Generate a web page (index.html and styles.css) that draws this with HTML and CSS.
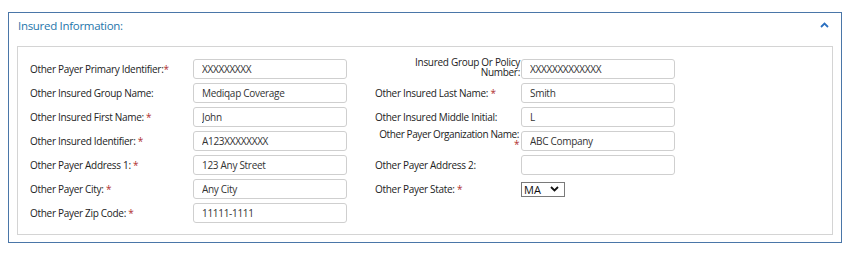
FILE: index.html
```html
<!DOCTYPE html>
<html>

<head>
    <title>Insured Information</title>
    <link rel="stylesheet" href="styles.css">
</head>

<body>
    <div class="panel">
        <div class="panel-header">
            <span class="panel-title">Insured Information:</span>
            <span class="chevron">
                <svg width="9" height="6" viewBox="0 0 9 6"><path d="M1 5 L4.5 1.5 L8 5" fill="none" stroke="#2a6fc0" stroke-width="1.8"/></svg>
            </span>
        </div>
        <div class="panel-body">
            <div class="fields">
                <div class="field left">
                    <label for="primary-id">Other Payer Primary Identifier:<span class="req">*</span></label>
                    <input type="text" id="primary-id" value="XXXXXXXXX">
                </div>
                <div class="field right">
                    <label for="policy" class="wrap">Insured Group Or Policy Number:</label>
                    <input type="text" id="policy" value="XXXXXXXXXXXXX">
                </div>

                <div class="field left">
                    <label for="group-name">Other Insured Group Name:</label>
                    <input type="text" id="group-name" value="Mediqap Coverage">
                </div>
                <div class="field right">
                    <label for="last-name">Other Insured Last Name: <span class="req">*</span></label>
                    <input type="text" id="last-name" value="Smith">
                </div>

                <div class="field left">
                    <label for="first-name">Other Insured First Name: <span class="req">*</span></label>
                    <input type="text" id="first-name" value="John">
                </div>
                <div class="field right">
                    <label for="middle">Other Insured Middle Initial:</label>
                    <input type="text" id="middle" value="L">
                </div>

                <div class="field left">
                    <label for="insured-id">Other Insured Identifier: <span class="req">*</span></label>
                    <input type="text" id="insured-id" value="A123XXXXXXXX">
                </div>
                <div class="field right">
                    <label for="org-name" class="wrap tight">Other Payer Organization Name: <span class="req">*</span></label>
                    <input type="text" id="org-name" value="ABC Company">
                </div>

                <div class="field left">
                    <label for="address1">Other Payer Address 1: <span class="req">*</span></label>
                    <input type="text" id="address1" value="123 Any Street">
                </div>
                <div class="field right">
                    <label for="address2">Other Payer Address 2:</label>
                    <input type="text" id="address2" value="">
                </div>

                <div class="field left">
                    <label for="city">Other Payer City: <span class="req">*</span></label>
                    <input type="text" id="city" value="Any City">
                </div>
                <div class="field right">
                    <label for="state">Other Payer State: <span class="req">*</span></label>
                    <div class="select-box" id="state">
                        <span>MA</span>
                        <svg width="9" height="6" viewBox="0 0 9 6"><path d="M1 1 L4.5 4.5 L8 1" fill="none" stroke="#111" stroke-width="1.8"/></svg>
                    </div>
                </div>

                <div class="field left">
                    <label for="zip">Other Payer Zip Code: <span class="req">*</span></label>
                    <input type="text" id="zip" value="11111-1111">
                </div>
            </div>
        </div>
    </div>
</body>

</html>
```

FILE: styles.css
```css
body {
    margin: 12px 8px;
    font-family: "Open Sans", Arial, sans-serif;
    color: #333;
    background: #fff;
}

.panel {
    border: 1px solid #4a76a8;
    padding: 0 8px 7px 8px;
}

.panel-header {
    display: flex;
    justify-content: space-between;
    align-items: center;
    height: 24px;
    padding: 0 4px 0 1px;
    margin-bottom: 9px;
}

.panel-title {
    font-size: 11.5px;
    letter-spacing: -0.3px;
    color: #2676ab;
}

.chevron {
    display: flex;
}

.panel-body {
    border: 1px solid #d4d4d4;
    padding: 12px 12px 11px 12px;
}

.fields {
    display: grid;
    grid-template-columns: 317px 300px;
    column-gap: 28px;
    row-gap: 4px;
}

.field {
    display: flex;
    align-items: center;
    height: 20px;
}

.field label {
    font-size: 10px;
    letter-spacing: -0.3px;
    color: #222;
}

.field.left label {
    width: 163px;
}

.field.right label {
    width: 146px;
}

.field label.wrap {
    box-sizing: border-box;
    text-align: right;
    line-height: 10px;
    margin-top: -4px;
    padding-right: 1px;
}

.field label.tight {
    padding-right: 2px;
    letter-spacing: -0.4px;
}

.req {
    color: #b03030;
}

input[type="text"] {
    box-sizing: border-box;
    width: 154px;
    height: 20px;
    padding: 0 8px;
    border: 1px solid #cfcfcf;
    border-radius: 3px;
    font-family: "Open Sans", Arial, sans-serif;
    font-size: 10px;
    letter-spacing: -0.3px;
    color: #333;
}

.select-box {
    box-sizing: border-box;
    display: flex;
    align-items: center;
    justify-content: space-between;
    width: 44px;
    height: 15px;
    padding: 0 5px 0 2px;
    border: 1px solid #7a7a7a;
    font-size: 11px;
    color: #111;
}
```
